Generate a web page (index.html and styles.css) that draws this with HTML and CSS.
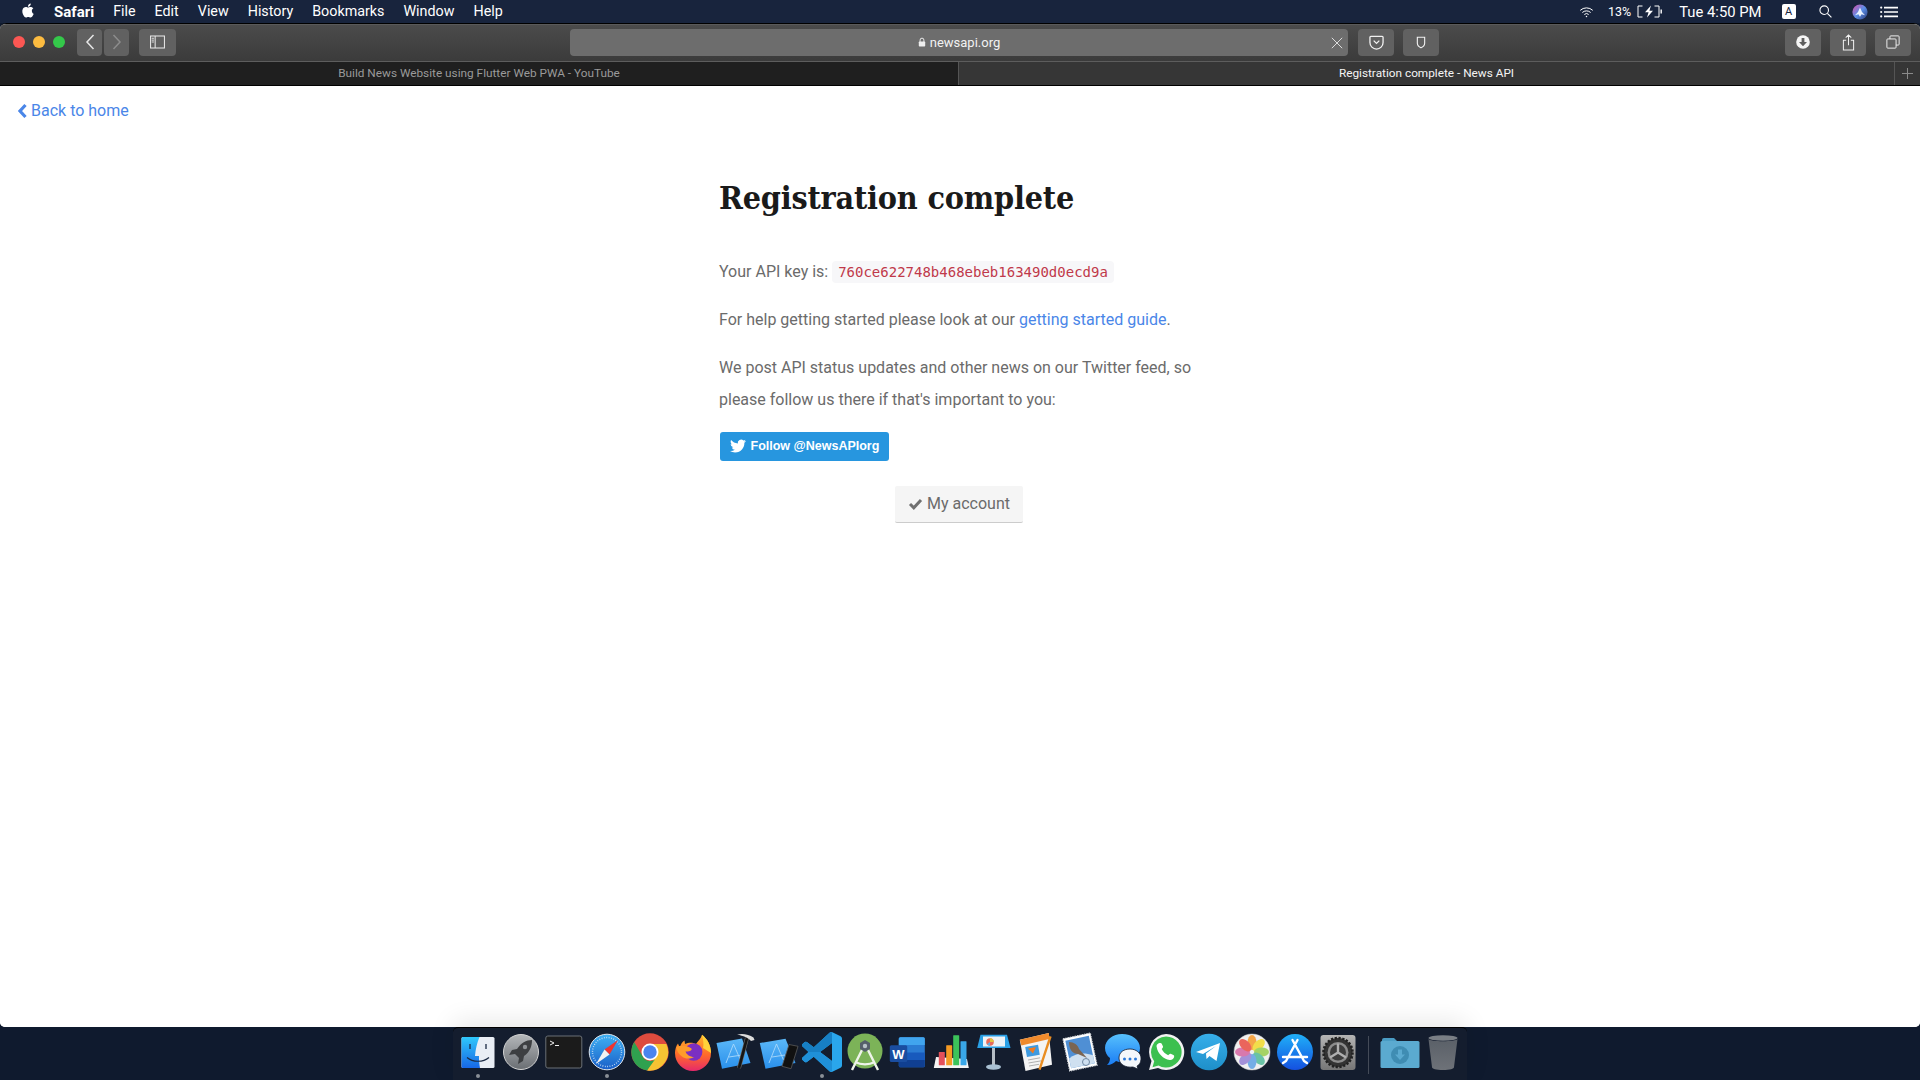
FILE: index.html
```html
<!DOCTYPE html>
<html lang="en">
<head>
<meta charset="utf-8">
<title>Registration complete - News API</title>
<link rel="stylesheet" href="styles.css">
</head>
<body>
<header class="menubar">
  <svg class="apple" viewBox="0 0 24 24"><path fill="#fff" d="M12.152 6.896c-.948 0-2.415-1.078-3.96-1.04-2.04.027-3.91 1.183-4.961 3.014-2.117 3.675-.546 9.103 1.519 12.09 1.013 1.454 2.208 3.09 3.792 3.039 1.52-.065 2.09-.987 3.935-.987 1.831 0 2.35.987 3.96.948 1.637-.026 2.676-1.48 3.676-2.948 1.156-1.688 1.636-3.325 1.662-3.415-.039-.013-3.182-1.221-3.22-4.857-.026-3.04 2.48-4.494 2.597-4.559-1.429-2.09-3.623-2.324-4.39-2.376-2-.156-3.675 1.09-4.61 1.09zM15.53 3.83c.843-1.012 1.4-2.427 1.245-3.83-1.207.052-2.662.805-3.532 1.818-.78.896-1.454 2.338-1.273 3.714 1.338.104 2.715-.688 3.559-1.701"/></svg>
  <nav class="menus">
    <span class="menu-app">Safari</span><span>File</span><span>Edit</span><span>View</span><span>History</span><span>Bookmarks</span><span>Window</span><span>Help</span>
  </nav>
  <div class="status">
    <svg class="st-wifi" viewBox="0 0 18 14" fill="none" stroke="#fff" stroke-width="1.2"><path d="M1.5 5a11 11 0 0 1 15 0M4 7.6a7.4 7.4 0 0 1 10 0M6.4 10a3.8 3.8 0 0 1 5.2 0"/><circle cx="9" cy="12.3" r=".9" fill="#fff" stroke="none"/></svg>
    <span class="st-pct">13%</span>
    <svg class="st-batt" viewBox="0 0 26 13"><path fill="none" stroke="#fff" stroke-width="1" d="M6 1H1.5v11H6M18 1h4.5v11H18"/><path fill="#fff" d="M24 4.5h1.4v4H24zM14.5 .5 8.5 7.2h3.6L10.5 12.6l6-6.8h-3.6z"/></svg>
    <span class="st-time">Tue 4:50 PM</span>
    <span class="st-a">A</span>
    <svg class="st-search" viewBox="0 0 14 14" fill="none" stroke="#fff" stroke-width="1.2"><circle cx="5.6" cy="5.6" r="4.6"/><path d="m9 9 4.4 4.4"/></svg>
    <svg class="st-siri" viewBox="0 0 16 16"><defs><linearGradient id="siriG" x1="0" y1="0" x2="1" y2="1"><stop offset="0" stop-color="#e04fa8"/><stop offset=".5" stop-color="#5a8fe8"/><stop offset="1" stop-color="#2d3a78"/></linearGradient></defs><circle cx="8" cy="8" r="7.6" fill="url(#siriG)"/><path fill="#e9f2ff" d="M8 3.5 10 8l3 3.2-3.4-1L8 12.8 6.4 10.2 3 11.2 6 8z"/></svg>
    <svg class="st-list" viewBox="0 0 18 12" fill="#fff"><circle cx="1.2" cy="1.6" r="1.1"/><circle cx="1.2" cy="6" r="1.1"/><circle cx="1.2" cy="10.4" r="1.1"/><path d="M4 .8h14v1.6H4zM4 5.2h14v1.6H4zM4 9.6h14v1.6H4z"/></svg>
  </div>
</header>

<div class="window">
  <div class="toolbar">
    <div class="lights"><i class="light red"></i><i class="light yellow"></i><i class="light green"></i></div>
    <div class="nav-pair">
      <button class="tb tb-nav"><svg viewBox="0 0 12 18" class="ic-chev" fill="none" stroke="#e6e6e6" stroke-width="1.5"><path d="M9.5 2 3 9l6.5 7"/></svg></button>
      <button class="tb tb-nav"><svg viewBox="0 0 12 18" class="ic-chev" fill="none" stroke="#8c8c8c" stroke-width="1.5"><path d="M2.5 2 9 9l-6.5 7"/></svg></button>
    </div>
    <button class="tb tb-side"><svg viewBox="0 0 16 14" class="ic-side" fill="none" stroke="#e8e8e8" stroke-width="1.1"><rect x=".6" y=".6" width="14.8" height="12.8"/><path d="M5.5 .6v12.8"/><path stroke-width="1" d="M1.8 3h2.4M1.8 5h2.4M1.8 7h2.4"/></svg></button>
    <div class="address">
      <svg viewBox="0 0 10 12" class="ic-lock"><path fill="none" stroke="#eee" stroke-width="1.2" d="M2.6 6V3.6a2.4 2.4 0 0 1 4.8 0V6"/><rect x="1" y="5.4" width="8" height="6.2" rx="1" fill="#eee"/></svg>
      <span class="addr-text">newsapi.org</span>
      <svg viewBox="0 0 12 12" class="ic-x" fill="none" stroke="#dcdcdc" stroke-width="1"><path d="m.8.8 10.4 10.4M11.2.8.8 11.2"/></svg>
    </div>
    <button class="tb tb-ext"><svg viewBox="0 0 16 16" class="ic-ext" fill="none" stroke="#f0f0f0" stroke-width="1.4"><path d="M2 1.5h12a1 1 0 0 1 1 1V8a7 7 0 0 1-14 0V2.500a1 1 0 0 1 1-1z"/><path d="m5 6 3 3 3-3"/></svg></button>
    <button class="tb tb-ext tb-shield"><svg viewBox="0 0 12 16" class="ic-shield" fill="none" stroke="#f0f0f0" stroke-width="1.4"><path d="M1.500 1.500h9v7.500c0 3-2 4.500-4.500 5.500-2.500-1-4.500-2.500-4.500-5.500z"/></svg></button>
    <div class="tb-right">
      <button class="tb tb-ext"><svg viewBox="0 0 14 14" class="ic-dl"><circle cx="7" cy="7" r="6.800" fill="#f5f5f5"/><path fill="#5f5f5f" d="M5.600 3h2.800v4H11l-4 4.200L3 7h2.600z"/></svg></button>
      <button class="tb tb-ext"><svg viewBox="0 0 14 18" class="ic-share" fill="none" stroke="#f0f0f0" stroke-width="1.100"><path d="M4.500 6.500H1.500v10.500h11V6.500H9.500M7 12V1M4 3.800 7 .9l3 2.900"/></svg></button>
      <button class="tb tb-ext"><svg viewBox="0 0 16 16" class="ic-tabs" fill="none" stroke="#f0f0f0" stroke-width="1.100"><rect x="1" y="4.500" width="10.500" height="10.500" rx="1"/><path d="M4.500 4.500V2a1 1 0 0 1 1-1H14a1 1 0 0 1 1 1v8.500a1 1 0 0 1-1 1h-2.500"/></svg></button>
    </div>
  </div>
  <div class="tabbar">
    <div class="tab tab-off">Build News Website using Flutter Web PWA - YouTube</div>
    <div class="tab tab-on">Registration complete - News API</div>
    <div class="tab-add"><svg viewBox="0 0 11 11" class="ic-plus" stroke="#8a8a8a" stroke-width="1"><path d="M5.500 0v11M0 5.500h11"/></svg></div>
  </div>
  <main class="page">
    <a class="back" href="#"><svg viewBox="0 0 10 16" class="ic-back" fill="none" stroke="#4a86e8" stroke-width="3.200"><path d="M8 2 2.500 8 8 14"/></svg>Back to home</a>
    <section class="panel">
      <h1>Registration complete</h1>
      <p>Your API key is: <code>760ce622748b468ebeb163490d0ecd9a</code></p>
      <p>For help getting started please look at our <a href="#">getting started guide</a>.</p>
      <p>We post API status updates and other news on our Twitter feed, so please follow us there if that's important to you:</p>
      <a class="tw" href="#"><svg viewBox="0 0 24 24" class="ic-bird"><path fill="#fff" d="M23.953 4.570a10 10 0 01-2.825.775 4.958 4.958 0 002.163-2.723c-.951.555-2.005.959-3.127 1.184a4.920 4.920 0 00-8.384 4.482C7.690 8.095 4.067 6.130 1.640 3.162a4.822 4.822 0 00-.666 2.475c0 1.710.870 3.213 2.188 4.096a4.904 4.904 0 01-2.228-.616v.060a4.923 4.923 0 003.946 4.827 4.996 4.996 0 01-2.212.085 4.936 4.936 0 004.604 3.417 9.867 9.867 0 01-6.102 2.105c-.390 0-.779-.023-1.170-.067a13.995 13.995 0 007.557 2.209c9.053 0 13.998-7.496 13.998-13.985 0-.210 0-.420-.015-.630A9.935 9.935 0 0024 4.590z"/></svg>Follow @NewsAPIorg</a>
      <div class="acct-row"><a class="acct" href="#"><svg viewBox="0 0 14 12" class="ic-check" fill="none" stroke="#707070" stroke-width="3"><path d="m1.500 6 3.800 3.800 7.200-7.800"/></svg>My account</a></div>
    </section>
  </main>
</div>

<footer class="deskbar">
  <div class="dock">
    <div class="cell"><svg class="app" viewBox="0 0 40 40"><defs><linearGradient id="fL" x1="0" y1="0" x2="0" y2="1"><stop offset="0" stop-color="#2fc8fb"/><stop offset="1" stop-color="#1767e6"/></linearGradient></defs><rect x="3.500" y="5" width="33" height="31" rx="1.500" fill="#e9eef5"/><path fill="url(#fL)" d="M5 5h16.500c-2.500 6-4 12-4.500 19h4c-.2 4 .3 8 1 12H5a1.500 1.500 0 0 1-1.500-1.500v-28A1.500 1.500 0 0 1 5 5z"/><path stroke="#1b2a44" stroke-width="1.300" d="M12 12v5M28 12v5" fill="none"/><path d="M9 25.500c6 5 16 5 22 0" stroke="#1b2a44" stroke-width="1.200" fill="none"/></svg><i class="run"></i></div>
    <div class="cell"><svg class="app" viewBox="0 0 40 40"><defs><linearGradient id="rk" x1="0" y1="0" x2="0" y2="1"><stop offset="0" stop-color="#b4b7ba"/><stop offset="1" stop-color="#6a6e73"/></linearGradient></defs><circle cx="20" cy="20" r="17.500" fill="url(#rk)" stroke="#d2d2d2" stroke-width="1"/><path fill="#3d3f42" d="M31 8c-6 0-11 3-15 9l-5 1-3 5 6-1 4 4-1 6 5-3 1-5c6-4 8-10 8-16z"/><circle cx="24" cy="15" r="2.200" fill="#8f9296"/></svg></div>
    <div class="cell"><svg class="app" viewBox="0 0 40 40"><rect x="1.800" y="4" width="36" height="32" rx="2" fill="#1b1b1b" stroke="#6a7076" stroke-width="1"/><path d="m6 9 4 2-4 2M11 13.500h4" stroke="#f0f0f0" stroke-width="1" fill="none"/></svg></div>
    <div class="cell"><svg class="app" viewBox="0 0 40 40"><defs><linearGradient id="sf" x1="0" y1="0" x2="0" y2="1"><stop offset="0" stop-color="#3fb1f3"/><stop offset="1" stop-color="#1a5fc8"/></linearGradient></defs><circle cx="20" cy="20" r="17.800" fill="url(#sf)" stroke="#dfe6ee" stroke-width="1"/><circle cx="20" cy="20" r="14.500" fill="none" stroke="#cfe4f8" stroke-width="1.400" stroke-dasharray=".8 1.600"/><path fill="#f0342f" d="M31 8 17.500 17.500l5 5z"/><path fill="#f2f2f2" d="M9 32 17.500 17.500l5 5z"/></svg><i class="run"></i></div>
    <div class="cell"><svg class="app" viewBox="0 0 40 40"><circle cx="20" cy="20" r="18.700" fill="#dd4b3e"/><path fill="#f6c333" d="M20 12h16.300A18.700 18.700 0 0 1 17 38.500L25.500 24a8 8 0 0 0-5.500-12z"/><path fill="#2fa14f" d="M4.200 10 13 25a8 8 0 0 0 7 4 8 8 0 0 0 5-1.600L17 38.500A18.700 18.700 0 0 1 4.200 10z"/><circle cx="20" cy="20" r="8.500" fill="#fff"/><circle cx="20" cy="20" r="6.700" fill="#4a84ee"/></svg></div>
    <div class="cell"><svg class="app" viewBox="0 0 40 40"><defs><linearGradient id="ff" x1="0" y1="0" x2="0" y2="1"><stop offset="0" stop-color="#ffb52b"/><stop offset=".55" stop-color="#ff6a2a"/><stop offset="1" stop-color="#e6296b"/></linearGradient></defs><path fill="url(#ff)" d="M29 2.700c5 4 9 10 9 18.300a18 18 0 0 1-36 0c0-3 1-7 3-9.500.5 1.500 1 2.500 2 3.500 1-3 2-5 4.500-6.500L12 12c4-2 8-1.500 11 0 2-3 5-5.500 6-9.300z"/><path fill="#ffd23a" d="M29 2.700c5 4 9 10 9 18.300l-8-5c1-4 0-9-1-13.300z"/><circle cx="20.700" cy="20" r="8.700" fill="#7b2fc2"/><path fill="#ff9c2a" d="M3.500 15c5-2 10-2 15 1.500 1 2.500-3 3-6 3 1 3 4.500 5.500 8.500 5.500-4 2.500-9 2-12-.5-3.500-2.500-5.500-5.500-5.500-9.500z"/></svg></div>
    <div class="cell"><svg class="app" viewBox="0 0 40 40"><defs><linearGradient id="xc" x1="0" y1="0" x2="0" y2="1"><stop offset="0" stop-color="#5bb8f8"/><stop offset="1" stop-color="#2a90ec"/></linearGradient></defs><path fill="url(#xc)" d="M.5 11 26 6.500l8.500 24.500L6 36.700z"/><path d="m10 31 7.500-19 7 16M13 25l13-2" stroke="#a9d8fb" stroke-width=".9" fill="none"/><path d="M31 6 23 36" stroke="#6a6a6a" stroke-width="4"/><path d="M31 6 23 36" stroke="#151515" stroke-width="2.800"/><path fill="#dcdcdc" d="M21 2.500c6-1.500 12 0 16.500 3l1 2.500-3.500 1c-3-3.500-7.500-5-14-6.500z"/></svg></div>
    <div class="cell"><svg class="app" viewBox="0 0 40 40"><path fill="url(#xc)" d="M.8 11 26.500 6.700l10 24.300L6.500 36.700z"/><path d="m10 31 7.500-19 7 16M13 25l13-2" stroke="#a9d8fb" stroke-width=".9" fill="none"/><path fill="#111" stroke="#5a5a5a" stroke-width=".8" d="m30 12.500 9 1.800-7 22.400-9-2.400z"/></svg></div>
    <div class="cell"><svg class="app" viewBox="0 0 100 100" ><path fill="#2aa6ec" d="M96.500 10.800 75.900.900a6.200 6.200 0 0 0-7.100 1.200L29.400 38.100 12.200 25.100a4.200 4.200 0 0 0-5.300.2L1.400 30.300a4.200 4.200 0 0 0 0 6.200L16.300 50 1.400 63.500a4.200 4.200 0 0 0 0 6.200l5.500 5a4.200 4.200 0 0 0 5.300.2l17.200-13 39.400 36a6.200 6.200 0 0 0 7.100 1.200l20.600-9.900a6.200 6.200 0 0 0 3.500-5.600V16.400a6.200 6.200 0 0 0-3.500-5.600zM75 72.700 45.100 50 75 27.300z"/><path fill="#177fc4" d="M68.800 2.100 29.400 38.100 12.200 25.100a4.200 4.200 0 0 0-5.300.2L1.400 30.300a4.200 4.200 0 0 0 0 6.200L16.300 50h28.800L75 27.300V.7a6.200 6.200 0 0 0-6.200 1.400z"/><path fill="#1f90d8" d="M16.300 50 1.400 63.500a4.200 4.200 0 0 0 0 6.200l5.500 5a4.200 4.200 0 0 0 5.300.2l17.200-13 39.400 36a6.200 6.200 0 0 0 6.200 1.400V72.700L45.100 50z"/></svg><i class="run"></i></div>
    <div class="cell"><svg class="app" viewBox="0 0 40 40"><circle cx="20" cy="19" r="17.500" fill="#7cb358"/><path d="M20 12 7 38M20 12l13 26M10 30c6 3 14 3 20 0" stroke="#eef4ea" stroke-width="2.400" fill="none"/><path fill="#55606a" d="m15 11 5-3 5 3v6l-5 3-5-3z"/><circle cx="20" cy="14" r="2.200" fill="#b8c2c8"/></svg></div>
    <div class="cell"><svg class="app" viewBox="0 0 40 40"><rect x="10.800" y="5.300" width="26" height="30" rx="1.500" fill="#2b7cd3"/><path fill="#41a5ee" d="M10.800 6.800a1.500 1.500 0 0 1 1.500-1.500h23a1.500 1.500 0 0 1 1.500 1.500V13H10.800z"/><path fill="#185abd" d="M10.800 20.500h26V28h-26z"/><path fill="#103f91" d="M10.800 28h26v5.800a1.500 1.500 0 0 1-1.500 1.500h-23a1.500 1.500 0 0 1-1.500-1.500z"/><rect x="1.800" y="13.300" width="17.400" height="16.700" rx="1.500" fill="#1a4da0"/><text x="10.500" y="26.500" class="word">W</text></svg></div>
    <div class="cell"><svg class="app" viewBox="0 0 40 40"><path fill="#f4f4f4" d="M5 25 36 27l1.800 9H2.800z"/><rect x="7.800" y="20" width="6" height="13.300" rx=".5" fill="#e4505a"/><rect x="15.200" y="13.300" width="6" height="20" rx=".5" fill="#f59a23"/><rect x="22.200" y="3.300" width="6" height="30" rx=".5" fill="#3cc35a"/><rect x="29.500" y="9.300" width="6" height="24" rx=".5" fill="#39a7e8"/></svg></div>
    <div class="cell"><svg class="app" viewBox="0 0 40 40"><path fill="#2aa0e6" d="M6.500 2.700H33L36.500 16H3.200z"/><rect x="9" y="4.500" width="22" height="10" fill="#eef2f6"/><circle cx="16" cy="10" r="3.800" fill="#e96b5a"/><path fill="#e3c23e" d="M16 6.200a3.800 3.800 0 0 1 3.800 3.800H16z"/><path fill="#5bb2e8" d="M16 10v3.800a3.800 3.800 0 0 1-3-1.500z"/><rect x="18" y="16" width="3" height="18" fill="#b6bec6"/><ellipse cx="19.500" cy="35" rx="7.500" ry="2.700" fill="#a9c0d2"/></svg></div>
    <div class="cell"><svg class="app" viewBox="0 0 40 40"><path fill="#f4f4f4" d="M2.800 7.700 31.800 1 35 32.700 8.500 39z"/><path fill="#f08a2c" d="M2.800 7.700 31.800 1l.6 6-28 6.500z"/><rect x="9" y="14" width="13" height="10" fill="#3e9ae0" transform="rotate(-10 15 19)"/><path fill="#f07a20" d="m11 16.500 8-1.500-3 6.500z"/><path d="m11 28 12-2.200M11.500 31l13-2.200M12 34l10-1.700" stroke="#a8a8a8" stroke-width=".9"/><path d="m33.500 4.300-11 33.400" stroke="#e98d22" stroke-width="2.400" fill="none"/></svg></div>
    <div class="cell"><svg class="app" viewBox="0 0 40 40"><g transform="rotate(-12 20 20)"><rect x="6" y="3.500" width="28" height="33" fill="#fff" stroke="#cfd3d8" stroke-width="1.200" stroke-dasharray="1.400 1"/><rect x="8" y="6" width="24" height="28" fill="#4f8fd4"/><path fill="#cfe0f0" d="M8 24c8-4 16-3 24 2v8H8z"/></g><path fill="#7b6552" d="M9 10c5 0 9 3 10 7l8 9-9-4c-5 0-9-4-9-12z"/><circle cx="26" cy="30" r="3.500" fill="none" stroke="#6f87a0"/></svg></div>
    <div class="cell"><svg class="app" viewBox="0 0 40 40"><defs><linearGradient id="ms" x1="0" y1="0" x2="0" y2="1"><stop offset="0" stop-color="#57c0fc"/><stop offset="1" stop-color="#1a7df5"/></linearGradient></defs><path fill="url(#ms)" d="M19 2c10 0 18 6 18 14s-8 14-18 14c-2 0-4 0-6-1-2 2-5 4-9 4 2-2 3-4 3-7-3-2-5-6-5-10C2 8 10 2 19 2z"/><path fill="#f4f7fb" stroke="#141d2e" stroke-width=".8" d="M27 17c6 0 11 4 11 9s-2 7-4 8l1 3-5-2c-8 1-14-3-14-9s5-9 11-9z"/><g fill="#2a78d8"><circle cx="21.500" cy="27" r="1.500"/><circle cx="27" cy="27" r="1.500"/><circle cx="32.500" cy="27" r="1.500"/></g></svg></div>
    <div class="cell"><svg class="app" viewBox="0 0 40 40"><path fill="#f2f2f2" d="M20 2a18 18 0 1 1-8 34L3 38l2.500-9A18 18 0 0 1 20 2z"/><path fill="#3cc04f" d="M20 4.500a15.500 15.500 0 1 1-7.500 29l-6 1.700 1.700-6A15.500 15.500 0 0 1 20 4.500z"/><path fill="#fff" d="M14.500 11c1 0 1.500 1 2.500 3.500.3 1-.7 1.800-1.300 2.600 1.500 3 3.500 4.800 6.500 6.200.8-.7 1.600-1.800 2.500-1.500 2.500 1 3.500 1.500 3.500 2.500 0 2.500-2.500 4-4.500 3.700-6.500-1-12-6.500-13-13C10 13 12 11 14.500 11z"/></svg></div>
    <div class="cell"><svg class="app" viewBox="0 0 40 40"><defs><linearGradient id="tg" x1="0" y1="0" x2="0" y2="1"><stop offset="0" stop-color="#37aeea"/><stop offset="1" stop-color="#1e8fc9"/></linearGradient></defs><circle cx="20" cy="20" r="18.300" fill="url(#tg)"/><path fill="#fff" d="M7 20 31 11l-3.500 18-7-5-3 3-.5-5.500L27 14l-13 8z"/></svg></div>
    <div class="cell"><svg class="app" viewBox="0 0 40 40"><circle cx="20" cy="20" r="18" fill="#f0f0f0" stroke="#c8c8c8" stroke-width=".5"/><g opacity=".92"><ellipse cx="20" cy="10.500" rx="4.500" ry="7.500" fill="#f6a03a"/><ellipse cx="20" cy="10.500" rx="4.500" ry="7.500" fill="#f3dc3c" transform="rotate(45 20 20)"/><ellipse cx="20" cy="10.500" rx="4.500" ry="7.500" fill="#9fd05a" transform="rotate(90 20 20)"/><ellipse cx="20" cy="10.500" rx="4.500" ry="7.500" fill="#5ec0a0" transform="rotate(135 20 20)"/><ellipse cx="20" cy="10.500" rx="4.500" ry="7.500" fill="#6aa8e6" transform="rotate(180 20 20)"/><ellipse cx="20" cy="10.500" rx="4.500" ry="7.500" fill="#9d8ad8" transform="rotate(225 20 20)"/><ellipse cx="20" cy="10.500" rx="4.500" ry="7.500" fill="#d66fa8" transform="rotate(270 20 20)"/><ellipse cx="20" cy="10.500" rx="4.500" ry="7.500" fill="#ea5a50" transform="rotate(315 20 20)"/></g></svg></div>
    <div class="cell"><svg class="app" viewBox="0 0 40 40"><defs><linearGradient id="as" x1="0" y1="0" x2="0" y2="1"><stop offset="0" stop-color="#20b0f8"/><stop offset="1" stop-color="#1450e0"/></linearGradient></defs><circle cx="20" cy="20" r="18" fill="url(#as)"/><path d="M22.500 8 11 29M17.500 8 29 29M8 25h24M8 31l3-2M32 31l-3-2" stroke="#fff" stroke-width="2.400" fill="none" stroke-linecap="round"/></svg></div>
    <div class="cell"><svg class="app" viewBox="0 0 40 40"><defs><linearGradient id="sp" x1="0" y1="0" x2="0" y2="1"><stop offset="0" stop-color="#b4b4b4"/><stop offset="1" stop-color="#767676"/></linearGradient></defs><rect x="2.500" y="3" width="35" height="35" rx="3" fill="url(#sp)"/><circle cx="20" cy="20.500" r="14.500" fill="#333" stroke="#222" stroke-width="2.600" stroke-dasharray="2.200 1.600"/><circle cx="20" cy="20.500" r="10.500" fill="#8c8c8c"/><circle cx="20" cy="20.500" r="8" fill="#3d3d3d"/><path d="M20 20.500v-9M20 20.500l8 5M20 20.500l-8 5" stroke="#b0b0b0" stroke-width="2.400"/></svg></div>
    <div class="sep"><i class="sep-line"></i></div>
    <div class="cell"><svg class="app" viewBox="0 0 40 40"><path fill="#4a9cc4" d="M2 8a2 2 0 0 1 2-2h10l3 3h-15z"/><rect x=".500" y="9" width="39" height="27" rx="1.500" fill="#5baad0"/><circle cx="20" cy="23" r="9" fill="#3f8db3"/><path fill="#5baad0" d="M18 17.500h4v5h3l-5 5.500-5-5.500h3z"/></svg></div>
    <div class="cell"><svg class="app" viewBox="0 0 40 40"><defs><linearGradient id="tr" x1="0" y1="0" x2="0" y2="1"><stop offset="0" stop-color="#5a6068"/><stop offset="1" stop-color="#6e7278"/></linearGradient></defs><ellipse cx="20" cy="6" rx="14.500" ry="2.800" fill="#7a7f85"/><path fill="url(#tr)" d="M5.500 7c1.500 3 27.500 3 29 0L31 35c0 2-4 3-11 3S9 37 9 35z"/></svg></div>
  </div>
</footer>
</body>
</html>
```
FILE: styles.css
```css
*{box-sizing:border-box}
html,body{margin:0;height:100%}
body{width:1920px;height:1080px;overflow:hidden;display:flex;flex-direction:column;background:#0f1a2e;font-family:Roboto,"Liberation Sans",sans-serif}

.menubar{height:23px;flex:none;display:flex;align-items:center;padding:0 0 0 21px;background:#18243d;color:#fff;font-family:Roboto,"Liberation Sans",sans-serif;font-size:14.300px}
.apple{width:14px;height:15px;margin-right:19px;margin-top:-2px}
.menus{display:flex;gap:19px}
.menu-app{font-weight:700;font-size:15px}
.status{margin-left:auto;display:flex;align-items:center}
.st-wifi{width:15px;height:12px;margin-right:14px}
.st-pct{font-size:12.500px;margin-right:5px}
.st-batt{width:27px;height:13px;margin-right:16px}
.st-time{margin-right:20px;font-size:14.800px}
.st-a{width:14px;height:15px;background:#fff;color:#18243d;border-radius:2px;font-size:11px;display:flex;align-items:center;justify-content:center;margin-right:23px}
.st-search{width:13px;height:13px;margin-right:20px}
.st-siri{width:16px;height:16px;margin-right:12px}
.st-list{width:18px;height:12px;margin-right:22.500px}

.window{flex:1;min-height:0;display:flex;flex-direction:column;border-top:1px solid #000;border-radius:6px 6px 5px 5px;overflow:hidden;background:#fff}
.toolbar{height:37px;flex:none;display:flex;align-items:center;padding:0 9px 2px 13px;background:linear-gradient(#4b4b4b,#3b3b3b);border-top:1px solid #5a5a5a}
.lights{display:flex;gap:8px;margin-right:12px}
.light{width:12px;height:12px;border-radius:50%;display:block}
.red{background:#fc5753}.yellow{background:#fdbc40}.green{background:#34c84a}
.tb{border:0;padding:0;height:27px;border-radius:4px;background:#616161;display:flex;align-items:center;justify-content:center}
.nav-pair{display:flex;gap:2px;margin-right:10px}
.tb-nav{width:25px}
.tb-side{width:37px;margin-right:394px}
.ic-chev{width:12px;height:18px}
.ic-side{width:15px;height:14px}
.address{width:778px;height:27px;background:#6d6d6d;border-radius:4px;display:flex;align-items:center;justify-content:center;position:relative;color:#f2f2f2;font-size:13px;margin-right:10px}
.ic-lock{width:8px;height:10px;margin-right:4px}
.ic-x{width:12px;height:12px;position:absolute;right:5px;top:8px}
.tb-ext{width:36px}
.tb-shield{margin-left:9px}
.ic-ext{width:15px;height:15px}
.ic-shield{width:10px;height:13px}
.tb-right{margin-left:auto;display:flex;gap:9px}
.ic-dl{width:14px;height:14px}
.ic-share{width:13px;height:17px}
.ic-tabs{width:14px;height:14px}

.tabbar{height:25px;flex:none;display:flex;border-top:1px solid #5d5d5d;border-bottom:1px solid #000;font-size:11.800px;background:#1f1f1f}
.tab{display:flex;align-items:center;justify-content:center;padding-bottom:1px}
.tab-off{width:958px;color:#9a9a9a;background:#1f1f1f}
.tab-on{flex:1;color:#f4f4f4;background:#363636;border-left:1px solid #555}
.tab-add{width:26px;background:#363636;border-left:1px solid #555;display:flex;align-items:center;justify-content:center}
.ic-plus{width:11px;height:11px}

.page{flex:1;background:#fff;padding:15px 17px;color:#6b6b6b}
.back{display:inline-flex;align-items:center;color:#4a86e8;font-size:16px;text-decoration:none;line-height:20px}
.ic-back{width:11px;height:16px;margin-right:3px}
.panel{width:480px;margin:53px auto 0;position:relative;left:-1px;font-size:16px;line-height:32px}
.panel h1{margin:0 0 35.500px;font-family:"DejaVu Serif Condensed","DejaVu Serif",serif;font-weight:700;font-size:32px;letter-spacing:-.2px;line-height:44px;color:#1a1a1a}
.panel p{margin:0 0 16px}
.panel a{color:#4a86e8;text-decoration:none}
code{font-family:"DejaVu Sans Mono",monospace;font-size:14px;color:#c0394a;background:#f7f7f9;padding:3px 6px;border-radius:4px}
.panel .tw{display:inline-flex;align-items:center;height:29px;padding:0 9.500px;margin-left:1px;background:#2796df;border-radius:3px;color:#fff;font:700 12.500px/29px "Liberation Sans",sans-serif;vertical-align:top}
.ic-bird{width:16px;height:16px;margin-right:5px}
.acct-row{display:flex;justify-content:center;margin-top:22.500px}
.panel .acct{display:flex;align-items:center;height:37px;padding:0 13px;background:#f5f5f5;border-bottom:1px solid #ccc;border-radius:2px;color:#6b6b6b;line-height:36px}
.ic-check{width:15px;height:12px;margin-right:4px}

.deskbar{height:53px;flex:none;display:flex;justify-content:center;position:relative}
.dock{width:1014px;height:53px;display:flex;padding:0 3px;background:#141d2e;border-radius:5px 5px 0 0;box-shadow:0 -6px 26px rgba(0,0,0,.09);border-top:1px solid #000}
.cell{width:43px;padding:4px 0 0 1.500px;position:relative;flex:none}
.app{width:40px;height:40px;display:block}
.run{position:absolute;left:19.500px;bottom:2px;width:4px;height:4px;border-radius:50%;background:#8a8f96}
.sep{width:19px;flex:none;display:flex;justify-content:center;padding-top:8px}
.sep-line{display:block;width:1px;height:38px;background:#444b58}
.word{font:700 13px "Liberation Sans",sans-serif;fill:#fff;text-anchor:middle}
```
